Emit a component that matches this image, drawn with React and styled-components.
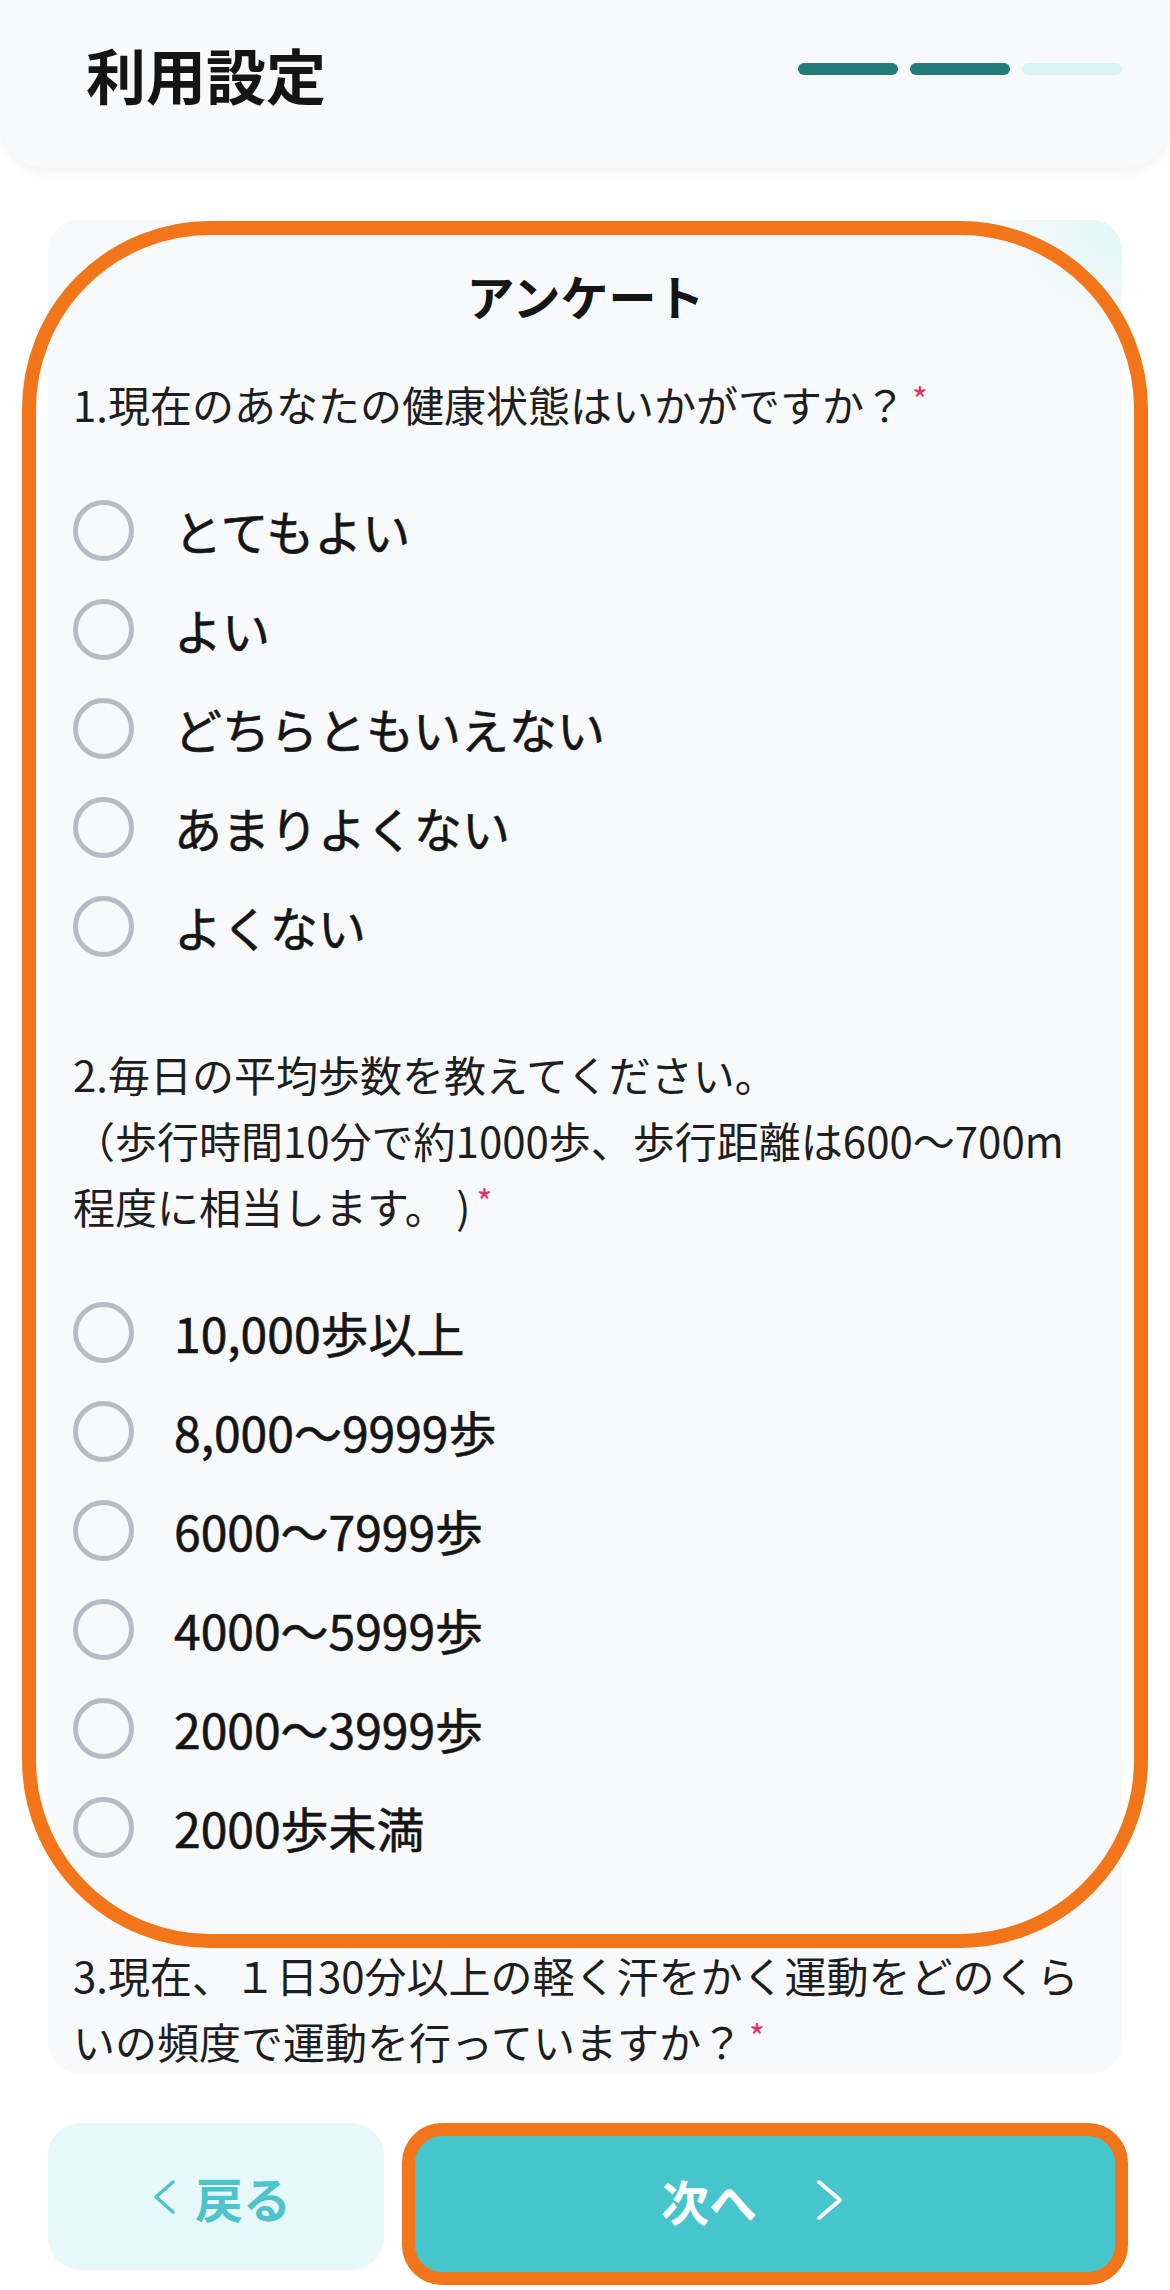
import React from "react";
import styled, { createGlobalStyle } from "styled-components";

const Global = createGlobalStyle`
  html, body { margin: 0; padding: 0; background: #ffffff; }
  body { font-family: "Noto Sans CJK JP", "Noto Sans", sans-serif; color: #1c1c1c; }
  * { box-sizing: border-box; }
`;

const Page = styled.div`
  width: 1170px;
  min-height: 2290px;
  background: #ffffff;
  font-family: "Noto Sans CJK JP", "Noto Sans", sans-serif;
`;

const Header = styled.header`
  height: 168px;
  padding: 0 48px 20px 86px;
  display: flex;
  align-items: center;
  justify-content: space-between;
  background: #f7f9fb;
  border-radius: 0 0 45px 45px;
  box-shadow: 0 5px 10px rgba(0, 0, 0, 0.05);
`;

const Title = styled.h1`
  margin: 0;
  font-size: 60px;
  line-height: 1;
  font-weight: 700;
  color: #141414;
`;

const Steps = styled.div`
  display: flex;
  gap: 12px;
  margin-bottom: 10px;
`;

const Step = styled.span`
  width: 100px;
  height: 12px;
  border-radius: 6px;
  background: ${(p) => (p.$done ? "#237b7b" : "#d7f3f4")};
`;

const Main = styled.main`
  padding: 52px 48px 0;
`;

const CardWrap = styled.div`
  position: relative;
`;

const Card = styled.section`
  height: 1853px;
  overflow: hidden;
  border-radius: 30px;
  padding: 36px 24px 0 25px;
  background: radial-gradient(ellipse 120px 110px at 100% 0%, #def6f8 0%, rgba(222, 246, 248, 0) 100%),
    #f7f9fb;
`;

const Highlight = styled.div`
  position: absolute;
  top: 1px;
  left: -26px;
  right: -26px;
  height: 1727px;
  border: 14px solid #f27619;
  border-radius: 188px;
  pointer-events: none;
`;

const CardTitle = styled.h2`
  margin: 0;
  text-align: center;
  font-size: 48px;
  line-height: 78px;
  font-weight: 700;
  color: #151515;
`;

const Question = styled.div`
  margin-top: 37px;
  & + & {
    margin-top: 65px;
  }
`;

const QuestionText = styled.p`
  margin: 0 0 44px;
  font-size: 42px;
  line-height: 66px;
  font-weight: 400;
  color: #1e1e1e;
`;

const Required = styled.span`
  color: #e0336a;
  font-size: 34px;
  line-height: 0;
  vertical-align: 9px;
  margin-left: 6px;
`;

const Options = styled.div`
  display: flex;
  flex-direction: column;
`;

const Option = styled.label`
  display: flex;
  align-items: center;
  gap: 40px;
  height: 99px;
  font-size: 48px;
  line-height: 1.2;
  font-weight: 400;
  color: #151515;
  -webkit-text-stroke: 0.6px #151515;
`;

const Radio = styled.span`
  flex: none;
  width: 61px;
  height: 61px;
  border: 5px solid #b7bbc2;
  border-radius: 50%;
`;

const Buttons = styled.div`
  display: flex;
  align-items: flex-start;
  gap: 18px;
  padding: 50px 0 0 48px;
`;

const BackButton = styled.button`
  width: 336px;
  height: 147px;
  border: none;
  border-radius: 33px;
  background: #e7f8fa;
  color: #4ec3cb;
  font-family: inherit;
  font-size: 48px;
  font-weight: 700;
  display: flex;
  align-items: center;
  justify-content: center;
  gap: 18px;
  padding: 0 0 0 10px;
`;

const NextButton = styled.button`
  width: 726px;
  height: 162px;
  border: 13px solid #f27619;
  border-radius: 40px;
  background: #47c5cd;
  color: #ffffff;
  font-family: inherit;
  font-size: 48px;
  font-weight: 700;
  display: flex;
  align-items: center;
  justify-content: center;
  gap: 58px;
  padding: 0 24px 8px 0;
`;

const Chevron = ({ dir, color, w, h, sw }) => (
  <svg width={w} height={h} viewBox={`0 0 ${w} ${h}`} fill="none">
    {dir === "left" ? (
      <path d={`M${w - 4} 3 L5 ${h / 2} L${w - 4} ${h - 3}`} stroke={color} strokeWidth={sw} strokeLinecap="round" strokeLinejoin="round" />
    ) : (
      <path d={`M4 3 L${w - 5} ${h / 2} L4 ${h - 3}`} stroke={color} strokeWidth={sw} strokeLinecap="round" strokeLinejoin="round" />
    )}
  </svg>
);

const q1 = ["とてもよい", "よい", "どちらともいえない", "あまりよくない", "よくない"];
const q2 = ["10,000歩以上", "8,000～9999歩", "6000～7999歩", "4000～5999歩", "2000～3999歩", "2000歩未満"];

export default function App() {
  return (
    <Page>
      <Global />
      <Header>
        <Title>利用設定</Title>
        <Steps>
          <Step $done />
          <Step $done />
          <Step />
        </Steps>
      </Header>
      <Main>
        <CardWrap>
          <Card>
            <CardTitle>アンケート</CardTitle>
            <Question>
              <QuestionText>
                1.現在のあなたの健康状態はいかがですか？<Required>*</Required>
              </QuestionText>
              <Options>
                {q1.map((o) => (
                  <Option key={o}>
                    <Radio />
                    {o}
                  </Option>
                ))}
              </Options>
            </Question>
            <Question>
              <QuestionText>
                2.毎日の平均歩数を教えてください。
                <br />
                （歩行時間10分で約1000歩、歩行距離は600～700m
                <br />
                程度に相当します。 )<Required>*</Required>
              </QuestionText>
              <Options>
                {q2.map((o) => (
                  <Option key={o}>
                    <Radio />
                    {o}
                  </Option>
                ))}
              </Options>
            </Question>
            <Question>
              <QuestionText>
                3.現在、１日30分以上の軽く汗をかく運動をどのくらいの頻度で運動を行っていますか？<Required>*</Required>
              </QuestionText>
            </Question>
          </Card>
          <Highlight />
        </CardWrap>
      </Main>
      <Buttons>
        <BackButton>
          <Chevron dir="left" color="#4ec3cb" w={26} h={36} sw={3.5} />
          戻る
        </BackButton>
        <NextButton>
          次へ
          <Chevron dir="right" color="#ffffff" w={30} h={42} sw={4} />
        </NextButton>
      </Buttons>
    </Page>
  );
}
